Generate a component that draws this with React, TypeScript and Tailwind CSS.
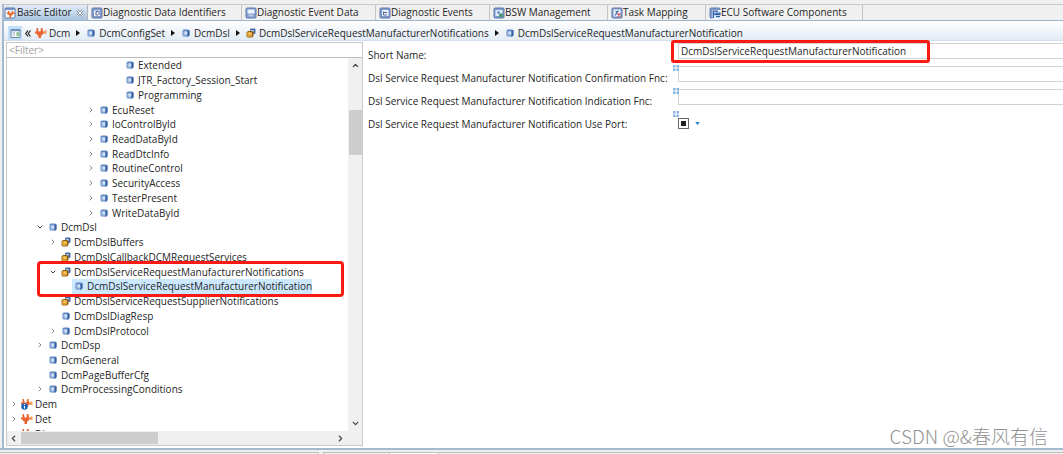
import type { ReactNode } from "react";
import { ChevronDown, ChevronLeft, ChevronRight, ChevronUp } from "lucide-react";

function CubeIcon() {
  return (
    <svg viewBox="0 0 16 16" className="size-2 shrink-0" aria-hidden="true">
      <rect x="1" y="1" width="14" height="14" rx="3" fill="#5f86c0" />
      <path d="M10 5l4-3l1 2v8l-3 3h-2z" fill="#3c64a6" />
      <rect x="2" y="4" width="9" height="10" rx="2" fill="#86a9d8" />
      <path d="M5 5h5v6H5z" fill="#d3e3f6" />
    </svg>
  );
}

function CubesIcon() {
  return (
    <svg viewBox="0 0 20 20" className="size-[10px] shrink-0" aria-hidden="true">
      <rect x="8" y="1" width="11" height="11" rx="2" fill="#4a6ba8" />
      <rect x="10" y="4" width="5" height="5" fill="#b9cfec" />
      <path d="M1 9l3-3h8l3 2v8l-3 3H3l-2-2z" fill="#8a5c14" />
      <rect x="2" y="8" width="10" height="10" rx="2" fill="#d9982b" />
      <path d="M5 9h6v5H5z" fill="#f2c45c" />
    </svg>
  );
}

function ModuleIcon({ badge = false }: { badge?: boolean }) {
  return (
    <svg viewBox="0 0 24 24" className="size-3 shrink-0" aria-hidden="true">
      <path d="M3 2h3l1 7h4l1-7h3l1 7h4v4h-4l-2 4h-2v5H7v-5H5l-2-4H0V9h3z" fill="#ea6430" />
      <path d="M17 9h2V7h4v7h-4v-2h-2z" fill="#f5a05a" />
      {badge && <circle cx="7" cy="17" r="6.5" fill="#1d64b8" />}
      {badge && <path d="M6 16h2v5H6zM6 12h2v2H6z" fill="#fff" />}
    </svg>
  );
}

type TabKind = "editor" | "data" | "event" | "events" | "bsw" | "task" | "ecu";

const tabGlyphs: Record<TabKind, ReactNode> = {
  editor: (
    <>
      <path d="M3 6h18v15H3z" fill="#eef4fc" />
      <path d="M4 11h4V8h3v4h4V8h3v3h4v3h-4l-2 3h-2v5h-3v-5l-3-2z" fill="#ee6a2c" />
    </>
  ),
  data: (
    <>
      <path d="M6 7h12v11H6z" fill="#eef2fb" />
      <path d="M14 9h-4v7h4M16 8v8" stroke="#56639a" strokeWidth="2" fill="none" />
    </>
  ),
  event: (
    <>
      <path d="M5 5h14v8H5z" fill="#eef4fc" />
      <path d="M7 15h10v4H7z" fill="#b9c8e6" />
    </>
  ),
  events: (
    <>
      <path d="M6 6h13v12H6z" fill="#eef4fc" />
      <path d="M9 9v7h7M10 11h6" stroke="#56639a" strokeWidth="2" fill="none" />
    </>
  ),
  bsw: (
    <>
      <path d="M5 6h14v12H5z" fill="#dfeaf8" />
      <path d="M9 9h4v4H9z" fill="#3d69ab" />
      <path d="M12 13h8v7h-8z" fill="#4d9a72" />
    </>
  ),
  task: (
    <>
      <path d="M5 5h14v14H5z" fill="#eef4fc" />
      <path d="M8 17l7-10M9 9h5" stroke="#3d69ab" strokeWidth="2.5" fill="none" />
      <path d="M13 13l6 6m0-6l-6 6" stroke="#d8434a" strokeWidth="2.5" fill="none" />
    </>
  ),
  ecu: (
    <>
      <path d="M7 6h17v18H7z" fill="#eef4fc" />
      <path d="M9 22V8h9M9 14h4M14 12h8v3h-8zM14 19h8" stroke="#2f5fa8" strokeWidth="2.5" fill="none" />
    </>
  ),
};

function TabIcon({ kind }: { kind: TabKind }) {
  return (
    <svg viewBox="0 0 24 24" className="size-3 shrink-0" aria-hidden="true">
      <rect x="2" y="2" width="20" height="20" rx="2" fill="#7f9ccc" stroke="#6079ad" strokeWidth="2" />
      {tabGlyphs[kind]}
    </svg>
  );
}

const tabs: { label: string; kind: TabKind; width: string }[] = [
  { label: "Diagnostic Data Identifiers", kind: "data", width: "w-[154px]" },
  { label: "Diagnostic Event Data", kind: "event", width: "w-[134px]" },
  { label: "Diagnostic Events", kind: "events", width: "w-[114px]" },
  { label: "BSW Management", kind: "bsw", width: "w-[118px]" },
  { label: "Task Mapping", kind: "task", width: "w-[98px]" },
  { label: "ECU Software Components", kind: "ecu", width: "w-[157px]" },
];

type IconKind = "cube" | "cubes" | "module" | "moduleInfo";

function NodeIcon({ kind }: { kind: IconKind }) {
  if (kind === "cube") return <CubeIcon />;
  if (kind === "cubes") return <CubesIcon />;
  return <ModuleIcon badge={kind === "moduleInfo"} />;
}

const crumbs: { label: string; icon: IconKind }[] = [
  { label: "Dcm", icon: "module" },
  { label: "DcmConfigSet", icon: "cube" },
  { label: "DcmDsl", icon: "cube" },
  { label: "DcmDslServiceRequestManufacturerNotifications", icon: "cubes" },
  { label: "DcmDslServiceRequestManufacturerNotification", icon: "cube" },
];

type TreeRow = {
  label: string;
  level: number;
  icon: IconKind;
  state?: "open" | "closed";
  selected?: boolean;
};

const indent = [
  "pl-0",
  "pl-[13px]",
  "pl-[26px]",
  "pl-[39px]",
  "pl-[52px]",
  "pl-[65px]",
  "pl-[77px]",
  "pl-[90px]",
  "pl-[103px]",
];

const rows: TreeRow[] = [
  { label: "Extended", level: 8, icon: "cube" },
  { label: "JTR_Factory_Session_Start", level: 8, icon: "cube" },
  { label: "Programming", level: 8, icon: "cube" },
  { label: "EcuReset", level: 6, icon: "cube", state: "closed" },
  { label: "IoControlById", level: 6, icon: "cube", state: "closed" },
  { label: "ReadDataById", level: 6, icon: "cube", state: "closed" },
  { label: "ReadDtcInfo", level: 6, icon: "cube", state: "closed" },
  { label: "RoutineControl", level: 6, icon: "cube", state: "closed" },
  { label: "SecurityAccess", level: 6, icon: "cube", state: "closed" },
  { label: "TesterPresent", level: 6, icon: "cube", state: "closed" },
  { label: "WriteDataById", level: 6, icon: "cube", state: "closed" },
  { label: "DcmDsl", level: 2, icon: "cube", state: "open" },
  { label: "DcmDslBuffers", level: 3, icon: "cubes", state: "closed" },
  { label: "DcmDslCallbackDCMRequestServices", level: 3, icon: "cubes" },
  { label: "DcmDslServiceRequestManufacturerNotifications", level: 3, icon: "cubes", state: "open" },
  { label: "DcmDslServiceRequestManufacturerNotification", level: 4, icon: "cube", selected: true },
  { label: "DcmDslServiceRequestSupplierNotifications", level: 3, icon: "cubes" },
  { label: "DcmDslDiagResp", level: 3, icon: "cube" },
  { label: "DcmDslProtocol", level: 3, icon: "cube", state: "closed" },
  { label: "DcmDsp", level: 2, icon: "cube", state: "closed" },
  { label: "DcmGeneral", level: 2, icon: "cube" },
  { label: "DcmPageBufferCfg", level: 2, icon: "cube" },
  { label: "DcmProcessingConditions", level: 2, icon: "cube", state: "closed" },
  { label: "Dem", level: 0, icon: "moduleInfo", state: "closed" },
  { label: "Det", level: 0, icon: "module", state: "closed" },
  { label: "Dio", level: 0, icon: "module", state: "closed" },
];

function TreeItem({ row }: { row: TreeRow }) {
  return (
    <li
      role="treeitem"
      aria-level={row.level + 1}
      aria-selected={row.selected ?? false}
      aria-expanded={row.state ? row.state === "open" : undefined}
      className={`flex min-h-0 items-center ${indent[row.level]}`}
    >
      <span className="flex w-3 shrink-0 justify-center">
        {row.state && (
          <button type="button" aria-label={`Toggle ${row.label}`} className="block">
            {row.state === "open" ? (
              <ChevronDown className="size-2 text-[#444]" strokeWidth={3} />
            ) : (
              <ChevronRight className="size-2 text-[#888]" strokeWidth={3} />
            )}
          </button>
        )}
      </span>
      <span className={`flex h-full items-center ${row.selected ? "bg-[#cce8ff]" : ""}`}>
        <span className="flex w-[13px] shrink-0 justify-center">
          <NodeIcon kind={row.icon} />
        </span>
        <span className="pl-[2px] leading-[14px] whitespace-nowrap">{row.label}</span>
      </span>
    </li>
  );
}

function Decorator() {
  return (
    <svg viewBox="0 0 6 6" className="absolute top-0 -left-[5px] size-[6px]" aria-hidden="true">
      <path d="M0 0h2.5v2.5H0zM3.5 0H6v2.5H3.5zM0 3.5h2.5V6H0zM3.5 3.5H6V6H3.5z" fill="#86b4e2" />
    </svg>
  );
}

function TextRow({ id, label, value }: { id: string; label: string; value?: string }) {
  return (
    <div className="grid h-[23px] grid-cols-[310px_1fr]">
      <label htmlFor={id} className="pt-px leading-6 whitespace-nowrap">
        {label}
      </label>
      <div className="relative">
        {value === undefined && <Decorator />}
        <input
          id={id}
          type="text"
          defaultValue={value}
          className="mt-px block h-4 w-full border border-r-0 border-[#d2d2d2] bg-white px-[2px] outline-none"
        />
        {value !== undefined && (
          <div className="pointer-events-none absolute -top-[2px] -left-[7px] h-[23px] w-[259px] rounded-[3px] border-[3px] border-[#fb1a12]" />
        )}
      </div>
    </div>
  );
}

export default function App() {
  return (
    <div className="flex h-screen flex-col overflow-hidden bg-[#f0f0f0] pt-1 font-['Open_Sans','Noto_Sans',sans-serif] text-[10px] text-[#262626]">
      <main className="relative ml-[2px] flex min-h-0 flex-1 flex-col border-l-2 border-[#a3bad2]">
        <div role="tablist" className="flex h-[17px] shrink-0 border-t border-b border-t-[#c8c8c8] border-b-[#9db6d0]">
          <div className="flex w-[84px] items-center rounded-tl-sm border-r border-[#b5b5b5] bg-linear-to-b from-[#e4edf7] to-[#a9c3de]">
            <button type="button" role="tab" aria-selected="true" className="flex items-center gap-px whitespace-nowrap">
              <TabIcon kind="editor" />
              Basic Editor
            </button>
            <button type="button" aria-label="Close Basic Editor" className="ml-1">
              <svg viewBox="0 0 8 8" className="size-2" aria-hidden="true">
                <path d="M1 1l6 6M7 1L1 7" stroke="#8794a3" strokeWidth="2.4" />
                <path d="M1 1l6 6M7 1L1 7" stroke="#fff" strokeWidth="1" />
              </svg>
            </button>
          </div>
          {tabs.map((tab) => (
            <button
              key={tab.label}
              type="button"
              role="tab"
              aria-selected="false"
              className={`flex shrink-0 items-center border-r border-[#c4c4c4] pl-[3px] whitespace-nowrap ${tab.width}`}
            >
              <TabIcon kind={tab.kind} />
              {tab.label}
            </button>
          ))}
        </div>

        <nav
          aria-label="Breadcrumb"
          className="flex h-5 shrink-0 items-center border-b border-[#d3dfec] bg-linear-to-b from-white to-[#e2ebf5] pt-[5px] pl-1"
        >
          <button type="button" aria-label="Show tree" className="flex size-[14px] items-center justify-center bg-[#c3e0fa]">
            <svg viewBox="0 0 22 20" className="h-[9px] w-[11px]" aria-hidden="true">
              <path d="M1 1h20v18H1z" fill="#fff" stroke="#5c7797" strokeWidth="2" />
              <path d="M1 1h20v4H1z" fill="#6f93bd" />
              <path d="M4 8h6M4 11h6M4 14h6" stroke="#8ea5bd" strokeWidth="1.5" />
              <path d="M13 7h6v9h-6z" fill="#8cc08b" />
            </svg>
          </button>
          <button type="button" aria-label="Back" className="mr-1 ml-[3px] block">
            <svg viewBox="0 0 12 14" className="h-[7px] w-[6px]" aria-hidden="true">
              <path d="M6 1L1.5 7L6 13M11 1L6.5 7L11 13" stroke="#222" strokeWidth="2.4" fill="none" />
            </svg>
          </button>
          <ol className="flex items-center">
            {crumbs.map((crumb, i) => (
              <li key={crumb.label} className="flex items-center">
                {i > 0 && (
                  <svg viewBox="0 0 4 6" className="mr-[5px] ml-[6px] h-[6px] w-1" aria-hidden="true">
                    <path d="M0 0l4 3l-4 3z" fill="#111" />
                  </svg>
                )}
                <a href="#" className="flex items-center whitespace-nowrap">
                  <span className="mr-[2px] flex w-3 justify-center">
                    <NodeIcon kind={crumb.icon} />
                  </span>
                  {crumb.label}
                </a>
              </li>
            ))}
          </ol>
        </nav>

        <div className="flex min-h-0 flex-1 bg-white pt-px pb-[2px] pl-[2px]">
          <section aria-label="Configuration tree" className="flex w-[357px] shrink-0 flex-col border border-[#c9c9c9]">
            <input
              type="text"
              aria-label="Filter"
              placeholder="<Filter>"
              className="block h-[15px] w-full shrink-0 border-b border-[#bdbdbd] px-[2px] outline-none placeholder:text-[#a0a0a0]"
            />
            <div className="flex min-h-0 flex-1">
              <div className="relative min-w-0 flex-1 overflow-hidden">
                <ul role="tree" className="grid h-[383px] auto-rows-fr pl-px">
                  {rows.map((row) => (
                    <TreeItem key={row.label} row={row} />
                  ))}
                </ul>
                <div className="pointer-events-none absolute top-[203px] left-[30px] h-9 w-[307px] rounded-[4px] border-[3px] border-[#fb1a12]" />
              </div>
              <div className="flex w-[14px] shrink-0 flex-col items-center justify-between bg-[#f0f0f0]">
                <button type="button" aria-label="Scroll up" className="mt-[3px] block">
                  <ChevronUp className="size-[9px] text-[#444]" strokeWidth={3.5} />
                </button>
                <div className="mt-10 mb-auto h-[45px] w-[13px] bg-[#cdcdcd]" />
                <button type="button" aria-label="Scroll down" className="mb-[3px] block">
                  <ChevronDown className="size-[9px] text-[#444]" strokeWidth={3.5} />
                </button>
              </div>
            </div>
            <div className="flex h-[14px] shrink-0 items-center bg-[#f0f0f0] pr-[17px] pl-[2px]">
              <button type="button" aria-label="Scroll left" className="block">
                <ChevronLeft className="size-[9px] text-[#444]" strokeWidth={3.5} />
              </button>
              <div className="ml-[3px] h-3 w-[137px] bg-[#cdcdcd]" />
              <button type="button" aria-label="Scroll right" className="ml-auto block">
                <ChevronRight className="size-[9px] text-[#444]" strokeWidth={3.5} />
              </button>
            </div>
          </section>

          <form className="min-w-0 flex-1 pl-[5px]">
            <TextRow id="short-name" label="Short Name:" value="DcmDslServiceRequestManufacturerNotification" />
            <TextRow id="confirmation" label="Dsl Service Request Manufacturer Notification Confirmation Fnc:" />
            <TextRow id="indication" label="Dsl Service Request Manufacturer Notification Indication Fnc:" />
            <div className="grid h-[23px] grid-cols-[310px_1fr]">
              <label htmlFor="use-port" className="pt-px leading-6 whitespace-nowrap">
                Dsl Service Request Manufacturer Notification Use Port:
              </label>
              <div className="relative flex items-center">
                <Decorator />
                <input
                  id="use-port"
                  type="checkbox"
                  ref={(el) => {
                    if (el) el.indeterminate = true;
                  }}
                  className="size-[11px] appearance-none border border-[#666] bg-white p-[2px] indeterminate:bg-[#222] indeterminate:bg-clip-content"
                />
                <button type="button" aria-label="Use port options" className="ml-[6px] block">
                  <svg viewBox="0 0 6 4" className="h-[3px] w-[5px]" aria-hidden="true">
                    <path d="M0 0h6L3 4z" fill="#1683d8" />
                  </svg>
                </button>
              </div>
            </div>
          </form>
        </div>
        <p className="absolute right-[15px] bottom-0 font-['Noto_Sans_CJK_SC',sans-serif] text-[19px] leading-6 font-light text-[#929292]">
          CSDN @&amp;春风有信
        </p>
      </main>
      <div className="h-[6px] shrink-0 border-t-2 border-[#a3bad2]">
        <div className="mt-[2px] flex">
          <div className="mr-1 h-[2px] w-[319px] border-t border-r border-[#c0c0c0]" />
          <div className="h-[2px] w-[66px] border-t border-l border-[#c0c0c0]" />
          <div className="h-[2px] w-[50px] border-x border-t border-[#c0c0c0] bg-white" />
          <div className="h-[2px] flex-1 border-t border-[#c0c0c0]" />
        </div>
      </div>
    </div>
  );
}
